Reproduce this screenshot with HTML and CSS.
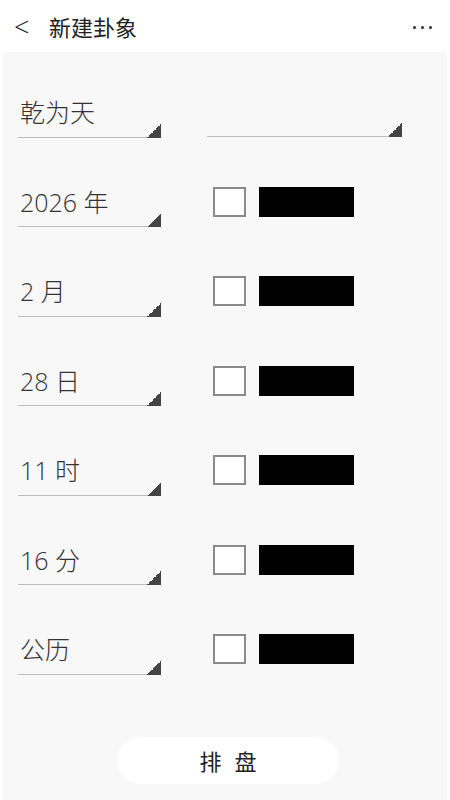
FILE: index.html
```html
<!DOCTYPE html>
<html lang="zh-CN">
<head>
<meta charset="utf-8">
<title>新建卦象</title>
<link rel="stylesheet" href="styles.css">
</head>
<body>
<header class="topbar">
  <span class="back">&lt;</span>
  <span class="title">新建卦象</span>
  <span class="more"><i></i><i></i><i></i></span>
</header>
<main class="panel">
  <div class="row">
    <div class="spinner"><span>乾为天</span></div>
    <div class="spinner wide"><span></span></div>
  </div>
  <div class="row">
    <div class="spinner"><span>2026 年</span></div>
    <div class="opts"><span class="check"></span><span class="block"></span></div>
  </div>
  <div class="row">
    <div class="spinner"><span>2 月</span></div>
    <div class="opts"><span class="check"></span><span class="block"></span></div>
  </div>
  <div class="row">
    <div class="spinner"><span>28 日</span></div>
    <div class="opts"><span class="check"></span><span class="block"></span></div>
  </div>
  <div class="row">
    <div class="spinner"><span>11 时</span></div>
    <div class="opts"><span class="check"></span><span class="block"></span></div>
  </div>
  <div class="row">
    <div class="spinner"><span>16 分</span></div>
    <div class="opts"><span class="check"></span><span class="block"></span></div>
  </div>
  <div class="row">
    <div class="spinner"><span>公历</span></div>
    <div class="opts"><span class="check"></span><span class="block"></span></div>
  </div>
  <button class="go">排 盘</button>
</main>
</body>
</html>
```
FILE: styles.css
```css
* { box-sizing: border-box; }
html, body { margin: 0; padding: 0; background: #ffffff; }
body {
  font-family: "Noto Sans CJK SC", sans-serif;
  color: #333333;
}
.topbar {
  height: 52px;
  display: flex;
  align-items: center;
  padding: 0 18px 0 14px;
}
.back {
  font-family: "Open Sans", sans-serif;
  font-weight: 300;
  font-size: 27px;
  color: #222;
  width: 35px;
  line-height: 1;
  margin-top: 0;
}
.title {
  font-family: "Noto Sans CJK SC", sans-serif;
  font-weight: 400;
  font-size: 22px;
  color: #222;
  flex: 1;
}
.more { display: flex; gap: 5px; margin-top: 3px; }
.more i { width: 3px; height: 3px; border-radius: 50%; background: #333; display: block; }

.panel {
  background: #f8f8f8;
  margin: 0 3px 0 3px;
  min-height: calc(100vh - 52px);
  padding: 15px 0 0 15px;
}
.row {
  height: 89.5px;
  display: grid;
  grid-template-columns: 143px 1fr;
  column-gap: 46px;
  align-items: center;
}
.spinner {
  position: relative;
  height: 52px;
  border-bottom: 1.5px solid #bdbdbd;
  display: flex;
  align-items: center;
  padding-left: 2px;
  font-family: "Open Sans", "Noto Sans CJK SC", sans-serif;
  font-weight: 300;
  font-size: 25px;
  color: #333;
}
.spinner::after {
  content: "";
  position: absolute;
  right: 0;
  bottom: -1px;
  width: 14px;
  height: 14px;
  background: linear-gradient(to bottom right, transparent 50%, #444 50%);
}
.spinner.wide { width: 195px; margin-top: -2px; }
.opts {
  display: flex;
  align-items: center;
  padding-left: 6px;
  margin-top: 1px;
}
.check {
  width: 33px;
  height: 30px;
  border: 2px solid #8a8a8a;
  background: #fff;
  display: block;
}
.block {
  width: 95px;
  height: 30px;
  background: #000;
  margin-left: 13px;
  display: block;
}
.go {
  display: block;
  margin: 43px 0 0 99px;
  width: 222px;
  height: 47px;
  border: none;
  border-radius: 24px;
  background: #ffffff;
  font-family: "Noto Sans CJK SC", sans-serif;
  font-size: 22px;
  color: #222;
  word-spacing: 8px;
  padding: 0;
}
```
